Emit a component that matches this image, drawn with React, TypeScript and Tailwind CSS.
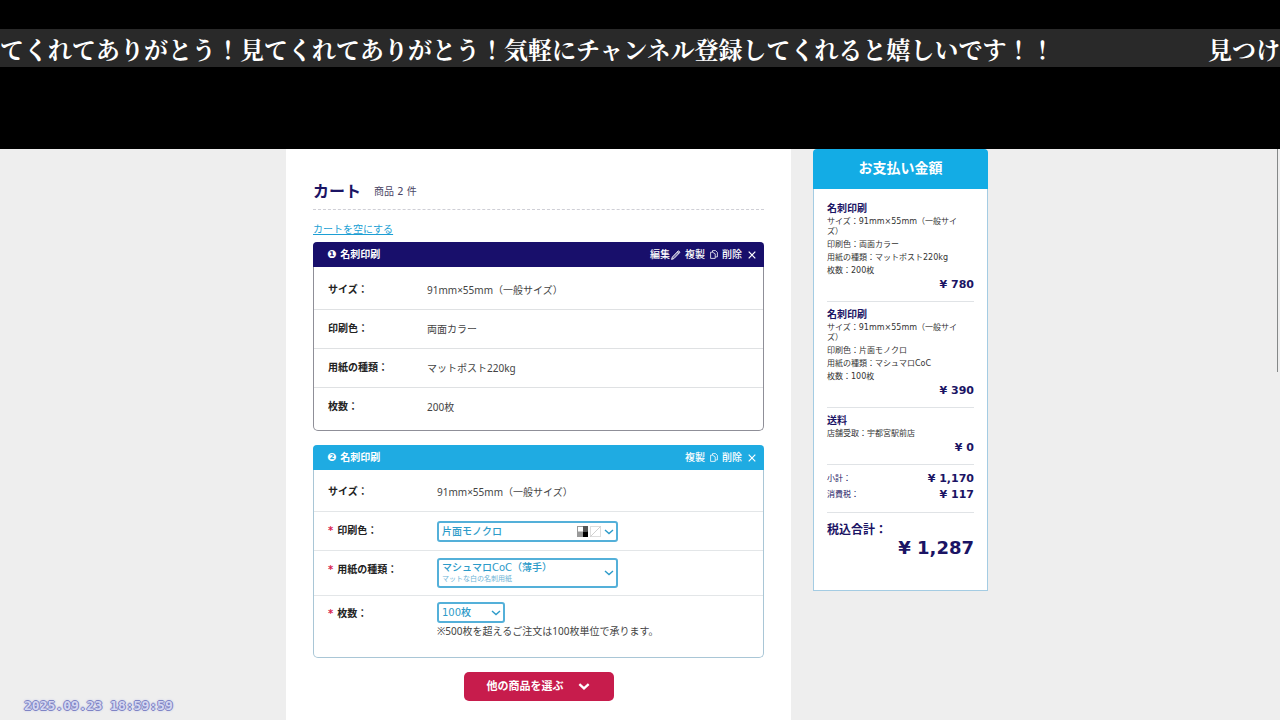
import type { ReactNode } from "react";

type Field = { label: string; value: string };

const firstItem: Field[] = [
  { label: "サイズ：", value: "91mm×55mm（一般サイズ）" },
  { label: "印刷色：", value: "両面カラー" },
  { label: "用紙の種類：", value: "マットポスト220kg" },
  { label: "枚数：", value: "200枚" },
];

function Chevron({ className }: { className: string }) {
  return (
    <svg viewBox="0 0 10 6" fill="none" stroke="currentColor" className={className} aria-hidden="true">
      <path d="M1 1l4 3.6L9 1" />
    </svg>
  );
}

function PencilIcon() {
  return (
    <svg viewBox="0 0 10 10" className="size-[10px]" fill="none" stroke="currentColor" strokeWidth="0.9" aria-hidden="true">
      <path d="M0.6 9.4l0.7-2.3L7.4 0.8l1.6 1.5L2.9 8.6z" fill="currentColor" fillOpacity="0.4" />
      <path d="M6.3 1.9l1.6 1.5" />
    </svg>
  );
}

function CopyIcon() {
  return (
    <svg viewBox="0 0 8 9" className="h-[9px] w-2" fill="none" stroke="currentColor" strokeWidth="0.8" aria-hidden="true">
      <path d="M2.5 2.2H0.6v6.2h4.6V7" />
      <path d="M2.5 0.6h3l1.9 1.8v4.5H5.2V3.8L2.5 2.2z" />
    </svg>
  );
}

function CloseIcon() {
  return (
    <svg viewBox="0 0 8 8" className="size-2" fill="none" stroke="currentColor" strokeWidth="1.2" aria-hidden="true">
      <path d="M0.7 0.7l6.6 6.6M7.3 0.7L0.7 7.3" />
    </svg>
  );
}

function CardHeader({ mark, className, editable }: { mark: string; className: string; editable?: boolean }) {
  return (
    <header className={`flex items-center justify-between rounded-t-[4px] py-1 pr-2 pl-3.5 text-white ${className}`}>
      <h2 className="flex items-center gap-1 text-[10px] leading-4 font-bold">
        <span className="font-['DejaVu_Sans'] text-[11px]">{mark}</span>
        名刺印刷
      </h2>
      <div className="flex items-center text-[10px] leading-[17px] font-medium">
        {editable && (
          <button type="button" className="mr-1 flex items-center gap-px">
            編集
            <PencilIcon />
          </button>
        )}
        <button type="button" className="mr-1 flex items-center gap-[5px]">
          複製
          <CopyIcon />
        </button>
        <button type="button" className="flex items-center gap-1.5">
          削除
          <CloseIcon />
        </button>
      </div>
    </header>
  );
}

function EditRow({ id, label, children, last }: { id: string; label: string; children: ReactNode; last?: boolean }) {
  return (
    <div className={`flex items-start pl-3.5 ${last ? "pt-1.5 pb-[18px]" : "border-b border-[#e3e6e8] pt-[7px] pb-[7px]"}`}>
      <label htmlFor={id} className="w-[109px] py-1 text-[10px] leading-4 font-bold text-[#222]">
        <span className="mr-1 text-[#d8214f]">*</span>
        {label}
      </label>
      <div>{children}</div>
    </div>
  );
}

const selectStyle =
  "block appearance-none rounded-[3px] border-2 border-[#54b0d9] bg-white pl-[3px] text-[10px] font-medium leading-4 text-[#2d9bc9]";

type Line = { title: string; details: ReactNode[]; price: string };

const lines: Line[] = [
  {
    title: "名刺印刷",
    details: [<>サイズ：91mm×55mm（一般サイ<br />ズ）</>, "印刷色：両面カラー", "用紙の種類：マットポスト220kg", "枚数：200枚"],
    price: "¥ 780",
  },
  {
    title: "名刺印刷",
    details: [<>サイズ：91mm×55mm（一般サイ<br />ズ）</>, "印刷色：片面モノクロ", "用紙の種類：マシュマロCoC", "枚数：100枚"],
    price: "¥ 390",
  },
  { title: "送料", details: ["店舗受取：宇都宮駅前店"], price: "¥ 0" },
];

function Summary() {
  return (
    <aside className="w-[175px] shrink-0 self-start">
      <h2 className="rounded-t-[4px] bg-[#13ace5] pt-[7px] pb-[9px] text-center text-[14px] leading-6 font-bold text-white">
        お支払い金額
      </h2>
      <div className="border border-t-0 border-[#a4cce3] bg-white px-[13px] pt-[7px] pb-8 text-[#1b1464]">
        {lines.map((line, i) => (
          <section key={i} className="border-b border-[#e0e3e6] pt-1.5 pb-2">
            <h3 className="text-[10px] leading-[14px] font-bold">{line.title}</h3>
            <ul className="my-px flex flex-col gap-[3px] text-[8px] leading-[10px] text-[#333]">
              {line.details.map((d, j) => (
                <li key={j} className="whitespace-nowrap">{d}</li>
              ))}
            </ul>
            <p className="text-right font-['DejaVu_Sans'] text-[11px] leading-4 font-bold">{line.price}</p>
          </section>
        ))}
        <dl className="border-b border-[#e0e3e6] pt-1.5 pb-[9px] text-[8px] leading-4">
          <div className="flex justify-between">
            <dt>小計：</dt>
            <dd className="font-['DejaVu_Sans'] text-[11px] font-bold">¥ 1,170</dd>
          </div>
          <div className="flex justify-between">
            <dt>消費税：</dt>
            <dd className="font-['DejaVu_Sans'] text-[11px] font-bold">¥ 117</dd>
          </div>
        </dl>
        <p className="pt-[9px] text-[12px] leading-4 font-bold">税込合計：</p>
        <p className="text-right font-['DejaVu_Sans'] text-[18px] leading-5 font-bold">¥ 1,287</p>
      </div>
    </aside>
  );
}

export default function App() {
  return (
    <div className="relative flex h-screen flex-col overflow-hidden bg-[#eeeeee] font-['DejaVu_Sans','Noto_Sans_CJK_JP',sans-serif]">
      <div className="shrink-0 bg-black pt-[29px] pb-[82px]">
        <div className="flex justify-between overflow-hidden bg-[#292929] pt-0.5 font-['Noto_Serif_CJK_JP','Noto_Sans_CJK_JP',serif] text-[24px] leading-9 font-bold whitespace-nowrap text-white">
          <span>てくれてありがとう！見てくれてありがとう！気軽にチャンネル登録してくれると嬉しいです！！</span>
          <span>見つけ</span>
        </div>
      </div>

      <div className="flex min-h-0 grow justify-center gap-[22px] pr-[6px]">
        <main className="w-full max-w-[505px] bg-white px-[27px] pt-[31px]">
          <div className="flex items-center gap-[13px] border-b border-dashed border-[#cfcfd6] pb-[5px] text-[#1b1464]">
            <h1 className="text-[16px] leading-6 font-bold">カート</h1>
            <p className="text-[10px] leading-6 text-[#4a4666]">商品 2 件</p>
          </div>
          <a href="#empty" className="mt-3 inline-block align-top text-[10px] leading-4 text-[#1c9fd4] underline">
            カートを空にする
          </a>

          <article className="mt-1 rounded-[5px] border border-t-0 border-[#8f8f98]">
            <CardHeader mark="❶" editable className="-mx-px bg-[#180f6b]" />
            <dl className="pt-1 pb-1">
              {firstItem.map((f) => (
                <div
                  key={f.label}
                  className="flex border-b border-[#dfe1e3] py-[11px] pl-3.5 text-[10px] leading-4 last:border-b-0"
                >
                  <dt className="w-[99px] font-bold text-[#222]">{f.label}</dt>
                  <dd className="font-['Noto_Sans','Noto_Sans_CJK_JP',sans-serif] text-[#444]">{f.value}</dd>
                </div>
              ))}
            </dl>
          </article>

          <article className="mt-3.5 rounded-[5px] border border-t-0 border-[#a9c6d6]">
            <CardHeader mark="❷" className="-mx-px bg-[#1fabe2]" />
            <dl className="pt-[3px]">
              <div className="flex border-b border-[#e3e6e8] py-[11px] pl-3.5 text-[10px] leading-4">
                <dt className="w-[109px] font-bold text-[#222]">サイズ：</dt>
                <dd className="font-['Noto_Sans','Noto_Sans_CJK_JP',sans-serif] text-[#444]">91mm×55mm（一般サイズ）</dd>
              </div>
            </dl>
            <EditRow id="color" label="印刷色：">
              <div className="relative mt-0.5">
                <select id="color" className={`${selectStyle} h-[21px] w-[181px]`}>
                  <option>片面モノクロ</option>
                </select>
                <div className="pointer-events-none absolute inset-y-0 right-1 flex items-center gap-[3px] text-[#2d9bc9]">
                  <svg viewBox="0 0 24 11" className="h-[11px] w-6" aria-hidden="true">
                    <rect x="0.5" y="0.5" width="10" height="10" fill="#fff" stroke="#999" />
                    <rect x="6" y="0" width="5" height="5.5" fill="#555" />
                    <rect x="0" y="5.5" width="6" height="5.5" fill="#999" />
                    <rect x="6" y="5.5" width="5" height="5.5" fill="#000" />
                    <rect x="13.5" y="0.5" width="10" height="10" fill="#fff" stroke="#ddd" />
                    <path d="M13.5 10.5l10-10" stroke="#bbb" strokeWidth="0.7" />
                  </svg>
                  <Chevron className="h-[6px] w-2.5 stroke-[1.4]" />
                </div>
              </div>
            </EditRow>
            <EditRow id="paper" label="用紙の種類：">
              <div className="relative">
                <select id="paper" className={`${selectStyle} h-[30px] w-[181px] pb-2.5`}>
                  <option>マシュマロCoC（薄手）</option>
                </select>
                <span className="pointer-events-none absolute bottom-1 left-[5px] text-[7px] leading-[10px] text-[#6db4d6]">
                  マットな白の名刺用紙
                </span>
                <div className="pointer-events-none absolute inset-y-0 right-1 flex items-center text-[#2d9bc9]">
                  <Chevron className="h-[6px] w-2.5 stroke-[1.4]" />
                </div>
              </div>
            </EditRow>
            <EditRow id="quantity" label="枚数：" last>
              <div className="relative w-[68px]">
                <select id="quantity" className={`${selectStyle} h-[21px] w-full`}>
                  <option>100枚</option>
                </select>
                <div className="pointer-events-none absolute inset-y-0 right-1 flex items-center text-[#2d9bc9]">
                  <Chevron className="h-[6px] w-2.5 stroke-[1.4]" />
                </div>
              </div>
              <p className="font-['Noto_Sans','Noto_Sans_CJK_JP',sans-serif] text-[10px] leading-4 text-[#444]">
                ※500枚を超えるご注文は100枚単位で承ります。
              </p>
            </EditRow>
          </article>

          <button
            type="button"
            className="mx-auto mt-3.5 flex items-center gap-3.5 rounded-[5px] bg-[#c71c4c] py-1.5 pr-6 pl-[23px] text-[11px] leading-[17px] font-bold text-white"
          >
            他の商品を選ぶ
            <Chevron className="h-[7px] w-3 stroke-2" />
          </button>
        </main>
        <Summary />
      </div>

      <div className="absolute top-[149px] right-[2px] h-[223px] w-px bg-[#858888]" />
      <time className="absolute bottom-1.5 left-6 font-['DejaVu_Sans_Mono',monospace] text-[13px] leading-4 font-bold whitespace-pre text-[#d4d7f2] [text-shadow:1px_0_0_#7f84c4,-1px_0_0_#7f84c4,0_1px_0_#7f84c4,0_-1px_0_#7f84c4,0_0_3px_#9298e0]">
        2025.09.23 18:59:59
      </time>
    </div>
  );
}
